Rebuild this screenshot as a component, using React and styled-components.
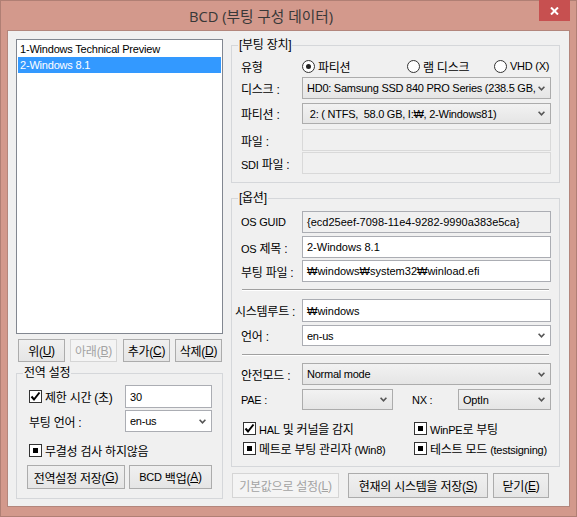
import React from "react";
import styled, { createGlobalStyle } from "styled-components";

const Global = createGlobalStyle`
  html, body { margin: 0; padding: 0; background: #d3998c; }
  * { box-sizing: border-box; }
`;

const Win = styled.div`
  width: 577px;
  height: 517px;
  background: #d3998c;
  border: 1px solid #b07f74;
  display: flex;
  flex-direction: column;
  font-family: "Liberation Sans", "Noto Sans CJK KR", sans-serif;
  font-size: 12px;
  letter-spacing: -0.25px;
  color: #000;
`;

const En = styled.span`
  font-size: 11px;
`;

const TitleBar = styled.div`
  height: 29px;
  display: flex;
  align-items: flex-start;
  flex-shrink: 0;
`;

const Title = styled.div`
  flex: 1;
  height: 29px;
  display: flex;
  align-items: center;
  justify-content: center;
  padding-right: 18px;
  font-family: "Open Sans", "Noto Sans CJK KR", sans-serif;
  font-size: 14.7px;
  letter-spacing: 0;
  color: #383838;
`;

const CloseBtn = styled.div`
  width: 31px;
  height: 21px;
  margin-top: -1px;
  margin-right: 6px;
  background: #c75050;
  display: flex;
  align-items: center;
  justify-content: center;
`;

const Client = styled.div`
  flex: 1;
  margin: 0 6px 9px 6px;
  border: 1px solid #b3867c;
  background: #f0f0f0;
  display: grid;
  grid-template-columns: 207px 329px;
  column-gap: 8px;
  padding: 8px 9px 0 8px;
  align-items: start;
`;

const Col = styled.div`
  display: flex;
  flex-direction: column;
`;

const ListBox = styled.div`
  height: 295px;
  border: 1px solid #828790;
  background: #fff;
  padding: 1px;
  font-size: 11px;
`;

const ListItem = styled.div`
  height: 16px;
  line-height: 16px;
  padding-left: 2px;
  white-space: nowrap;
  letter-spacing: -0.2px;
  background: ${(p) => (p.$selected ? "#3399ff" : "transparent")};
  color: ${(p) => (p.$selected ? "#fff" : "#000")};
`;

const ButtonBar = styled.div`
  display: flex;
  margin-top: ${(p) => p.$mt || 0}px;
  padding-left: ${(p) => p.$pl || 0}px;
  height: ${(p) => p.$h}px;
`;

const Button = styled.div`
  width: ${(p) => p.$w}px;
  height: 100%;
  margin-left: ${(p) => p.$ml || 0}px;
  border: 1px solid ${(p) => (p.$disabled ? "#d5d5d5" : "#acacac")};
  background: ${(p) =>
    p.$disabled ? "#f4f4f4" : "linear-gradient(#f0f0f0, #e5e5e5)"};
  color: ${(p) => (p.$disabled ? "#a3a3a3" : "#000")};
  display: flex;
  align-items: center;
  justify-content: center;
  white-space: nowrap;
`;

const Mn = styled.span`
  text-decoration: underline;
  text-underline-offset: 1px;
`;

const GroupBox = styled.div`
  position: relative;
  border: 1px solid #d5d7da;
  margin-top: ${(p) => p.$mt}px;
  height: ${(p) => p.$h}px;
  padding: ${(p) => p.$pad};
`;

const Legend = styled.span`
  position: absolute;
  top: -8px;
  left: 6px;
  line-height: 15px;
  padding: 0 1px;
  background: #f0f0f0;
  white-space: nowrap;
`;

const FieldRow = styled.div`
  display: grid;
  grid-template-columns: ${(p) => p.$cols || "61px 249px"};
  align-items: center;
  height: ${(p) => p.$h}px;
  margin-top: ${(p) => p.$mt || 0}px;
  padding-left: ${(p) => p.$pl || 0}px;
`;

const Label = styled.span`
  white-space: nowrap;
  margin-left: ${(p) => p.$shift || 0}px;
`;

const TextBox = styled.div`
  height: 100%;
  border: 1px solid ${(p) => (p.$disabled ? "#d9d9d9" : "#abadb3")};
  background: ${(p) => (p.$readonly || p.$disabled ? "#f0f0f0" : "#fff")};
  display: flex;
  align-items: center;
  padding-left: 4px;
  white-space: pre;
  overflow: hidden;
  font-size: 11px;
  letter-spacing: 0;
`;

const Combo = styled.div`
  height: 100%;
  border: 1px solid ${(p) => (p.$white ? "#abadb3" : "#acacac")};
  background: ${(p) => (p.$white ? "#fff" : "linear-gradient(#f2f2f2, #e5e5e5)")};
  display: flex;
  align-items: center;
  padding-left: 4px;
  font-size: 11px;
`;

const ComboText = styled.span`
  flex: 1;
  white-space: pre;
  overflow: hidden;
`;

const Chevron = styled.svg`
  width: 7px;
  height: 5px;
  margin-right: 5px;
  flex-shrink: 0;
`;

const Check = styled.label`
  display: inline-flex;
  align-items: center;
  gap: 3px;
  white-space: nowrap;
`;

const Box = styled.span`
  width: 13px;
  height: 13px;
  border: 1px solid #333;
  background: #fff;
  display: flex;
  align-items: center;
  justify-content: center;
  flex-shrink: 0;
`;

const Square = styled.span`
  width: 5px;
  height: 5px;
  background: #000;
`;

const RadioGroup = styled.div`
  display: flex;
  align-items: center;
`;

const RadioItem = styled.label`
  display: inline-flex;
  align-items: center;
  gap: 3px;
  width: ${(p) => (p.$w ? `${p.$w}px` : "auto")};
  white-space: nowrap;
`;

const Circle = styled.span`
  width: 13px;
  height: 13px;
  border-radius: 50%;
  border: 1px solid #333;
  background: #fff;
  display: flex;
  align-items: center;
  justify-content: center;
`;

const Dot = styled.span`
  width: 5px;
  height: 5px;
  border-radius: 50%;
  background: #222;
`;

const Separator = styled.div`
  height: 2px;
  border-top: 1px solid #a0a0a0;
  border-bottom: 1px solid #fff;
  margin: ${(p) => p.$mt}px 2px 0 1px;
`;

const Chev = () => (
  <Chevron viewBox="0 0 7 5">
    <polyline points="0.6,0.8 3.5,3.8 6.4,0.8" fill="none" stroke="#555" strokeWidth="1.6" />
  </Chevron>
);

const CheckBox = ({ state, children }) => (
  <Check>
    <Box>
      {state === "checked" && (
        <svg width="11" height="11" viewBox="0 0 11 11">
          <polyline points="1.5,5.5 4,8.5 9.5,1.5" fill="none" stroke="#000" strokeWidth="2" />
        </svg>
      )}
      {state === "mixed" && <Square />}
    </Box>
    <span>{children}</span>
  </Check>
);

const Radio = ({ on, w, children }) => (
  <RadioItem $w={w}>
    <Circle>{on && <Dot />}</Circle>
    <span>{children}</span>
  </RadioItem>
);

export default function App() {
  return (
    <>
      <Global />
      <Win>
        <TitleBar>
          <Title>BCD (부팅 구성 데이터)</Title>
          <CloseBtn>
            <svg width="9" height="8" viewBox="0 0 9 8">
              <line x1="1" y1="0.5" x2="8" y2="7.5" stroke="#fff" strokeWidth="2" />
              <line x1="8" y1="0.5" x2="1" y2="7.5" stroke="#fff" strokeWidth="2" />
            </svg>
          </CloseBtn>
        </TitleBar>
        <Client>
          <Col>
            <ListBox>
              <ListItem>1-Windows Technical Preview</ListItem>
              <ListItem $selected>2-Windows 8.1</ListItem>
            </ListBox>
            <ButtonBar $mt={5} $pl={2} $h={23}>
              <Button $w={47}>위(<Mn>U</Mn>)</Button>
              <Button $w={47} $ml={5} $disabled>아래(<Mn>B</Mn>)</Button>
              <Button $w={47} $ml={6}>추가(<Mn>C</Mn>)</Button>
              <Button $w={47} $ml={5}>삭제(<Mn>D</Mn>)</Button>
            </ButtonBar>
            <GroupBox $mt={11} $h={126} $pad="11px 10px 0 10px">
              <Legend>전역 설정</Legend>
              <FieldRow $h={23} $pl={2} $cols="96px 87px">
                <CheckBox state="checked">제한 시간 (초)</CheckBox>
                <TextBox>30</TextBox>
              </FieldRow>
              <FieldRow $h={22} $mt={2} $pl={2} $cols="96px 87px">
                <Label>부팅 언어 :</Label>
                <Combo $white>
                  <ComboText>en-us</ComboText>
                  <Chev />
                </Combo>
              </FieldRow>
              <FieldRow $h={14} $mt={10} $pl={2} $cols="1fr">
                <CheckBox state="mixed">무결성 검사 하지않음</CheckBox>
              </FieldRow>
              <ButtonBar $mt={9} $h={24}>
                <Button $w={98}>전역설정 저장(<Mn>G</Mn>)</Button>
                <Button $w={83} $ml={4}><En>BCD</En>&nbsp;백업(<Mn>A</Mn>)</Button>
              </ButtonBar>
            </GroupBox>
          </Col>

          <Col>
            <GroupBox $mt={6} $h={138} $pad="10px 8px 0 9px">
              <Legend>[부팅 장치]</Legend>
              <FieldRow $h={20}>
                <Label>유형</Label>
                <RadioGroup>
                  <Radio on w={105}>파티션</Radio>
                  <Radio w={87}>램 디스크</Radio>
                  <Radio><En>VHD (X)</En></Radio>
                </RadioGroup>
              </FieldRow>
              <FieldRow $h={22} $mt={1}>
                <Label>디스크 :</Label>
                <Combo>
                  <ComboText>HD0: Samsung SSD 840 PRO Series (238.5 GB,</ComboText>
                  <Chev />
                </Combo>
              </FieldRow>
              <FieldRow $h={21} $mt={4}>
                <Label>파티션 :</Label>
                <Combo>
                  <ComboText> 2: ( NTFS,  58.0 GB, I:₩, 2-Windows81)</ComboText>
                  <Chev />
                </Combo>
              </FieldRow>
              <FieldRow $h={22} $mt={5}>
                <Label>파일 :</Label>
                <TextBox $disabled />
              </FieldRow>
              <FieldRow $h={22} $mt={1}>
                <Label><En>SDI</En> 파일 :</Label>
                <TextBox $disabled />
              </FieldRow>
            </GroupBox>

            <GroupBox $mt={15} $h={269} $pad="12px 8px 0 9px">
              <Legend>[옵션]</Legend>
              <FieldRow $h={22}>
                <Label><En>OS GUID</En></Label>
                <TextBox $readonly>{"{ecd25eef-7098-11e4-9282-9990a383e5ca}"}</TextBox>
              </FieldRow>
              <FieldRow $h={22} $mt={3}>
                <Label><En>OS</En> 제목 :</Label>
                <TextBox>2-Windows 8.1</TextBox>
              </FieldRow>
              <FieldRow $h={22} $mt={2}>
                <Label>부팅 파일 :</Label>
                <TextBox>₩windows₩system32₩winload.efi</TextBox>
              </FieldRow>
              <Separator $mt={7} />
              <FieldRow $h={23} $mt={8}>
                <Label $shift={-6}>시스템루트 :</Label>
                <TextBox>₩windows</TextBox>
              </FieldRow>
              <FieldRow $h={21} $mt={3}>
                <Label>언어 :</Label>
                <Combo $white>
                  <ComboText>en-us</ComboText>
                  <Chev />
                </Combo>
              </FieldRow>
              <Separator $mt={8} />
              <FieldRow $h={22} $mt={7}>
                <Label>안전모드 :</Label>
                <Combo>
                  <ComboText>Normal mode</ComboText>
                  <Chev />
                </Combo>
              </FieldRow>
              <FieldRow $h={21} $mt={4} $cols="61px 91px 19px 46px 93px">
                <Label><En>PAE :</En></Label>
                <Combo>
                  <ComboText />
                  <Chev />
                </Combo>
                <span />
                <Label><En>NX :</En></Label>
                <Combo>
                  <ComboText>OptIn</ComboText>
                  <Chev />
                </Combo>
              </FieldRow>
              <FieldRow $h={16} $mt={10} $pl={2} $cols="171px 1fr">
                <CheckBox state="checked"><En>HAL</En> 및 커널을 감지</CheckBox>
                <CheckBox state="mixed"><En>WinPE</En>로 부팅</CheckBox>
              </FieldRow>
              <FieldRow $h={16} $mt={4} $pl={2} $cols="171px 1fr">
                <CheckBox state="mixed">메트로 부팅 관리자 <En>(Win8)</En></CheckBox>
                <CheckBox state="mixed">테스트 모드 <En>(testsigning)</En></CheckBox>
              </FieldRow>
            </GroupBox>

            <ButtonBar $mt={6} $pl={1} $h={25}>
              <Button $w={107} $disabled>기본값으로 설정(<Mn>L</Mn>)</Button>
              <Button $w={140} $ml={9}>현재의 시스템을 저장(<Mn>S</Mn>)</Button>
              <Button $w={56} $ml={5}>닫기(<Mn>E</Mn>)</Button>
            </ButtonBar>
          </Col>
        </Client>
      </Win>
    </>
  );
}
